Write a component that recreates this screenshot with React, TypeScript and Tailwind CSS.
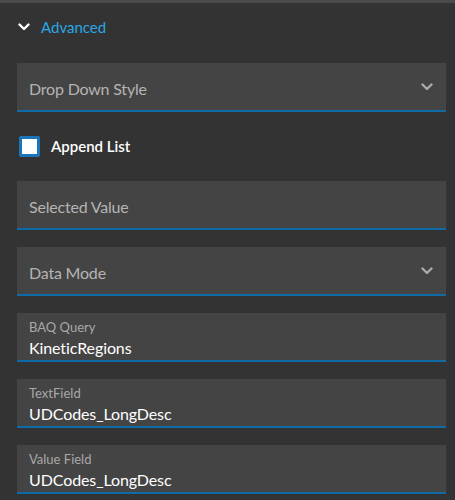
import { ReactNode } from "react"

const Chevron = ({ className }: { className: string }) => (
  <svg viewBox="0 0 12 8" className={className} fill="none" stroke="currentColor" strokeWidth="2.4" strokeLinecap="round" strokeLinejoin="round">
    <path d="M1.5 1.5 6 6l4.5-4.5" />
  </svg>
)

const Field = ({ children, select }: { children: ReactNode; select?: boolean }) => (
  <div className="flex items-center h-[49px] bg-[#444444] border-b-2 border-[#0f6aa8] pl-3 pr-3">
    <div className="flex-1 min-w-0">{children}</div>
    {select && <Chevron className="w-[12px] h-[8px] text-[#a9a9b0] mr-[1px]" />}
  </div>
)

const Placeholder = ({ text }: { text: string }) => (
  <span className="block pt-[5px] text-[16px] tracking-[-0.2px] text-[#b4b4b4]">{text}</span>
)

const Labeled = ({ label, value }: { label: string; value: string }) => (
  <div className="flex flex-col pt-[2px]">
    <span className="text-[13px] leading-[19px] text-[#a8a8a8]">{label}</span>
    <span className="text-[16px] leading-[21px] tracking-[-0.1px] text-white">{value}</span>
  </div>
)

export default function App() {
  return (
    <div className="w-[455px] h-[500px] bg-[#333333] border-t-[3px] border-[#4b4b4b] overflow-hidden" style={{ fontFamily: "Lato, 'Noto Sans', sans-serif" }}>
      <div className="flex items-center gap-[11px] pl-[18px] h-[48px]">
        <Chevron className="w-[12px] h-[8px] text-white" />
        <span className="text-[15px] text-[#2aa7e6]">Advanced</span>
      </div>
      <div className="flex flex-col gap-[17px] pl-[17px] pr-[9px] pt-[12px]">
        <Field select>
          <Placeholder text="Drop Down Style" />
        </Field>
        <label className="flex items-center gap-[11px] pl-[2px] h-[35px]">
          <span className="w-[21px] h-[21px] bg-white border-[3px] border-[#1b75b9] rounded-[2px]" />
          <span className="text-[15px] font-semibold text-white">Append List</span>
        </label>
        <Field>
          <Placeholder text="Selected Value" />
        </Field>
        <Field select>
          <Placeholder text="Data Mode" />
        </Field>
        <Field>
          <Labeled label="BAQ Query" value="KineticRegions" />
        </Field>
        <Field>
          <Labeled label="TextField" value="UDCodes_LongDesc" />
        </Field>
        <Field>
          <Labeled label="Value Field" value="UDCodes_LongDesc" />
        </Field>
      </div>
    </div>
  )
}
